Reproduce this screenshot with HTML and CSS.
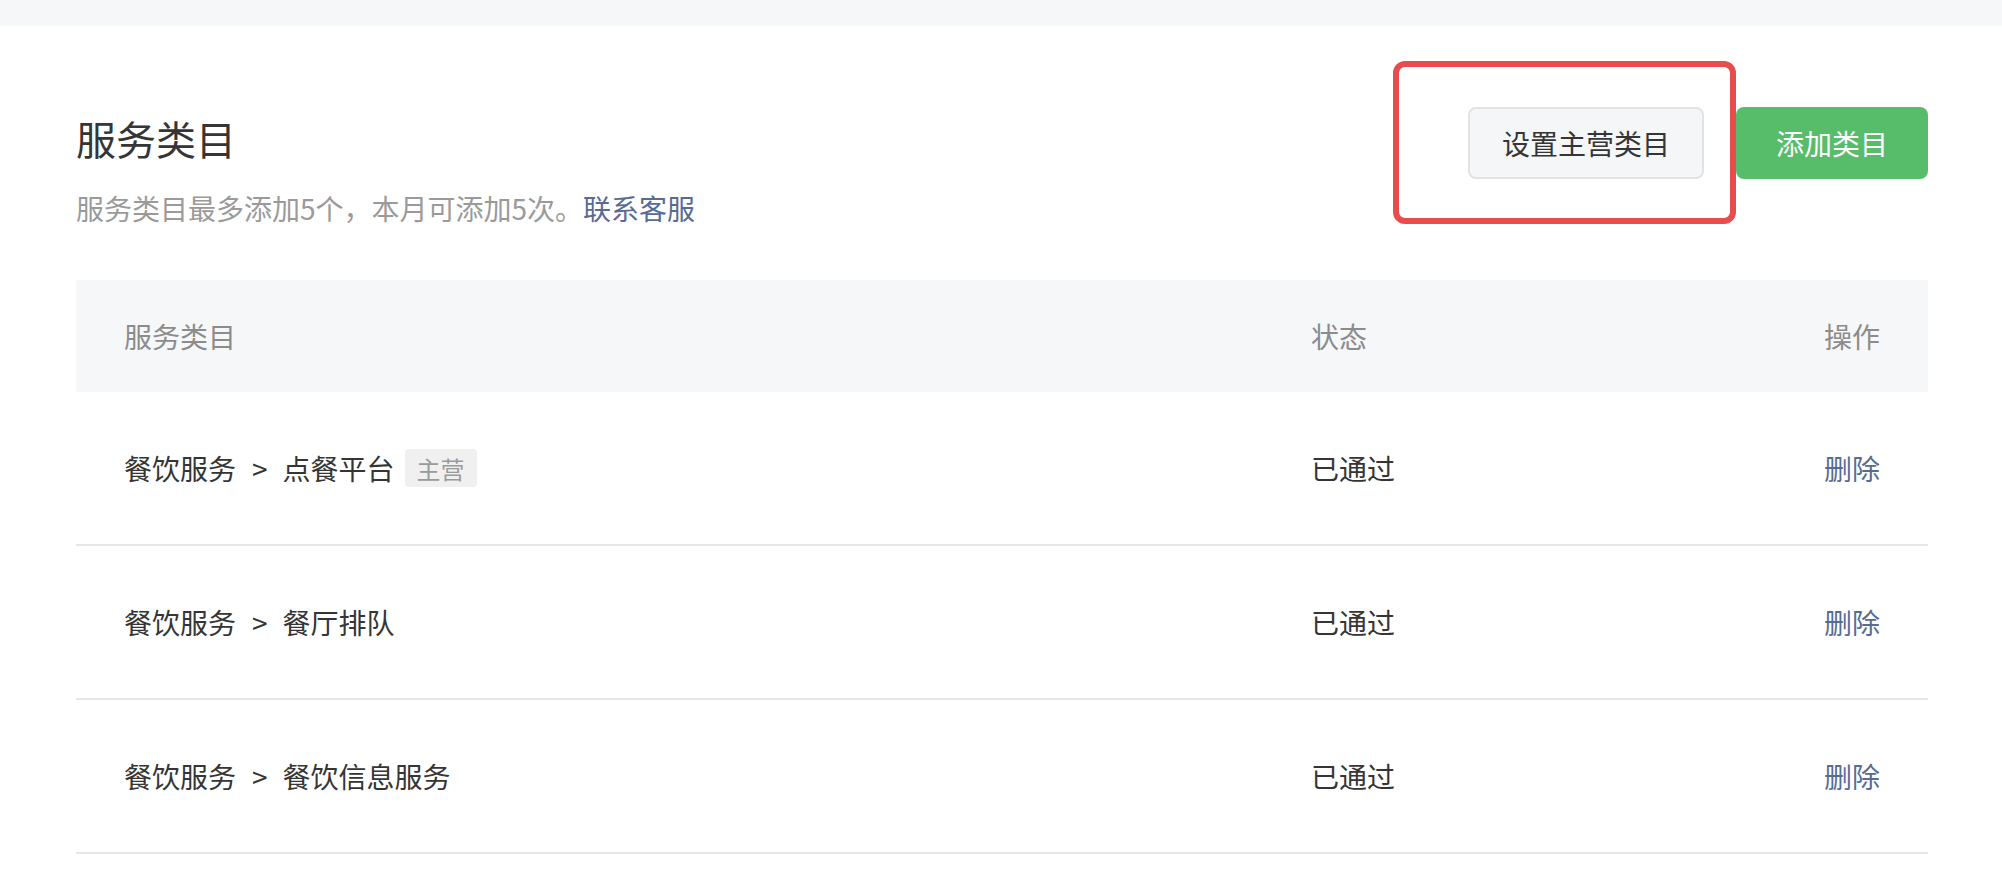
FILE: index.html
```html
<!DOCTYPE html>
<html lang="zh-CN">
<head>
<meta charset="utf-8">
<title>服务类目</title>
<link rel="stylesheet" href="styles.css">
</head>
<body>
<div class="topbar"></div>
<main class="page">
  <section class="head">
    <div class="head-text">
      <h1 class="title">服务类目</h1>
      <p class="desc">服务类目最多添加5个，本月可添加5次。<a class="link" href="#">联系客服</a></p>
    </div>
    <div class="actions">
      <div class="highlight-wrap">
        <span class="highlight"></span>
        <button class="btn btn-default">设置主营类目</button>
      </div>
      <button class="btn btn-primary">添加类目</button>
    </div>
  </section>

  <section class="table">
    <div class="row row-head">
      <div class="cell">服务类目</div>
      <div class="cell">状态</div>
      <div class="cell cell-op">操作</div>
    </div>
    <div class="row">
      <div class="cell">餐饮服务<span class="sep">&gt;</span>点餐平台<span class="tag">主营</span></div>
      <div class="cell">已通过</div>
      <div class="cell cell-op"><a class="link" href="#">删除</a></div>
    </div>
    <div class="row">
      <div class="cell">餐饮服务<span class="sep">&gt;</span>餐厅排队</div>
      <div class="cell">已通过</div>
      <div class="cell cell-op"><a class="link" href="#">删除</a></div>
    </div>
    <div class="row">
      <div class="cell">餐饮服务<span class="sep">&gt;</span>餐饮信息服务</div>
      <div class="cell">已通过</div>
      <div class="cell cell-op"><a class="link" href="#">删除</a></div>
    </div>
  </section>
</main>
</body>
</html>
```

FILE: styles.css
```css
* { box-sizing: border-box; }

html, body {
  margin: 0;
  padding: 0;
  background: #ffffff;
}

body {
  font-family: "Noto Sans CJK SC", "Noto Sans", "Liberation Sans", sans-serif;
  color: #353535;
}

.topbar {
  height: 26px;
  background: #f6f7f9;
}

.page {
  padding: 0 74px 0 76px;
}

.head {
  display: flex;
  justify-content: space-between;
  align-items: flex-start;
  padding-top: 81px;
  padding-bottom: 52px;
}

.head-text {
  padding-top: 1px;
}

.title {
  margin: 0;
  font-size: 40px;
  font-weight: 400;
  line-height: 60px;
  color: #353535;
}

.desc {
  margin: 20px 0 0;
  font-size: 28px;
  line-height: 40px;
  color: #9a9a9a;
}

.link {
  color: #576b95;
  text-decoration: none;
}

.actions {
  display: flex;
  align-items: flex-start;
  gap: 32px;
}

.highlight-wrap {
  position: relative;
}

.highlight {
  position: absolute;
  left: -75px;
  top: -46px;
  right: -32px;
  bottom: -45px;
  border: 6px solid #e84c4d;
  border-radius: 12px;
  pointer-events: none;
}

.btn {
  height: 72px;
  border-radius: 8px;
  font-family: inherit;
  font-size: 28px;
  line-height: 1;
  cursor: pointer;
}

.btn-default {
  width: 236px;
  background: #f5f6f8;
  border: 2px solid #e2e3e5;
  color: #353535;
}

.btn-primary {
  width: 192px;
  background: #57bd6a;
  border: 0;
  color: #ffffff;
}

.table {
  width: 100%;
}

.row {
  display: grid;
  grid-template-columns: minmax(0, 1fr) 400px 169px;
  align-items: center;
  height: 154px;
  padding: 0 48px;
  border-bottom: 2px solid #e5e5ea;
  font-size: 28px;
  color: #353535;
}

.row-head {
  height: 112px;
  background: #f6f7f9;
  border-bottom: 0;
  color: #8c8c8c;
}

.cell {
  display: flex;
  align-items: center;
  white-space: nowrap;
}

.cell-op {
  justify-content: flex-end;
}

.sep {
  margin: 0 15px 0 16px;
}

.tag {
  display: inline-flex;
  align-items: center;
  height: 38px;
  margin-left: 10px;
  padding: 0 12px;
  background: #f0f0f0;
  border-radius: 4px;
  font-size: 24px;
  color: #9a9a9a;
}
```
